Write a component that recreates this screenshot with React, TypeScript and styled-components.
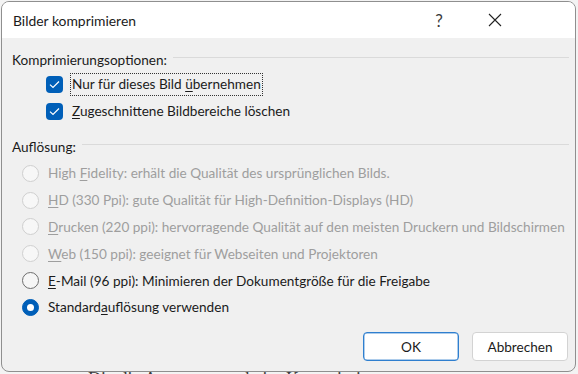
import React from "react";
import styled, { createGlobalStyle } from "styled-components";

const Global = createGlobalStyle`
  html, body { margin: 0; padding: 0; }
  body {
    width: 578px;
    height: 374px;
    overflow: hidden;
    background: #f3f3f3;
    font-family: Lato, "Open Sans", Arial, sans-serif;
  }
`;

const Backdrop = styled.div`
  width: 578px;
  height: 374px;
  overflow: hidden;
  display: flex;
  flex-direction: column;
  background: #f3f3f3;
`;

const Dialog = styled.div`
  position: relative;
  z-index: 1;
  flex: none;
  width: 575px;
  height: 371px;
  margin: 1px 0 0 1px;
  border: 1px solid #8f8f8f;
  border-radius: 8px;
  overflow: hidden;
  display: flex;
  flex-direction: column;
  background: #f0f0f0;
  box-sizing: border-box;
`;

const DocLine = styled.div`
  flex: none;
  margin: 0 0 0 88px;
  font-family: "Liberation Serif", serif;
  font-size: 18px;
  line-height: 14px;
  color: #3a3a3a;
  white-space: nowrap;
`;

const TitleBar = styled.div`
  flex: none;
  height: 36px;
  background: #ffffff;
  display: flex;
  align-items: center;
  padding-left: 11px;
`;

const Title = styled.div`
  flex: 1;
  font-size: 13.9px;
  color: #1b1b1b;
`;

const HelpButton = styled.div`
  width: 16px;
  text-align: center;
  color: #3a3a3a;
  font-size: 17px;
  font-weight: 400;
  margin-right: 41px;
`;

const CloseButton = styled.div`
  width: 14px;
  height: 14px;
  display: flex;
  margin-right: 73px;
`;

const Content = styled.div`
  flex: 1;
  display: flex;
  flex-direction: column;
  padding: 12px 0 10px 10px;
`;

const GroupHeader = styled.div<{ $top: number }>`
  height: 20px;
  margin-top: ${(p) => p.$top}px;
  display: flex;
  align-items: center;
  gap: 6px;
  font-size: 13.6px;
  color: #1b1b1b;
  padding-right: 6px;
  &::after {
    content: "";
    flex: 1;
    height: 1px;
    background: #dadada;
    margin-top: -6px;
  }
`;

const CheckRow = styled.div<{ $top?: number }>`
  height: 27px;
  margin-top: ${(p) => p.$top ?? 0}px;
  display: flex;
  align-items: center;
  padding-left: 34px;
  font-size: 13.6px;
  color: #1b1b1b;
`;

const CheckBox = styled.span`
  width: 17px;
  height: 17px;
  border-radius: 4px;
  background: #005fb8;
  display: flex;
  align-items: center;
  justify-content: center;
  margin-right: 7px;
  flex: none;
`;

const Label = styled.span<{ $focus?: boolean }>`
  padding: 2px 1px 3px 1px;
  border: 1px dotted ${(p) => (p.$focus ? "#333" : "transparent")};
`;

const RadioList = styled.div`
  margin-top: 3px;
  display: flex;
  flex-direction: column;
`;

const RadioRow = styled.div<{ $disabled?: boolean }>`
  height: 26.8px;
  display: flex;
  align-items: center;
  padding-left: 10px;
  font-size: 13.6px;
  white-space: nowrap;
  color: ${(p) => (p.$disabled ? "#9e9e9e" : "#1b1b1b")};
`;

const Radio = styled.span<{ $state: "disabled" | "off" | "on" }>`
  width: 17px;
  height: 17px;
  border-radius: 50%;
  box-sizing: border-box;
  flex: none;
  margin-right: 9px;
  display: flex;
  align-items: center;
  justify-content: center;
  background: ${(p) =>
    p.$state === "on" ? "#005fb8" : p.$state === "off" ? "#f6f6f6" : "#f7f7f7"};
  border: 1px solid
    ${(p) =>
      p.$state === "on" ? "#005fb8" : p.$state === "off" ? "#6e6e6e" : "#cfcfcf"};
  &::after {
    content: "";
    display: ${(p) => (p.$state === "on" ? "block" : "none")};
    width: 7px;
    height: 7px;
    border-radius: 50%;
    background: #ffffff;
  }
`;

const U = styled.span`
  text-decoration: underline;
  text-underline-offset: 2px;
`;

const Footer = styled.div`
  margin-top: auto;
  display: flex;
  justify-content: flex-end;
  gap: 13px;
  padding-right: 7px;
`;

const Button = styled.button<{ $primary?: boolean }>`
  width: 96px;
  height: 29px;
  box-sizing: border-box;
  border-radius: 4px;
  background: #ffffff;
  border: 1px solid ${(p) => (p.$primary ? "#2f7fcf" : "#d3d3d3")};
  box-shadow: ${(p) => (p.$primary ? "inset 0 0 0 0.5px #5d9ad8" : "none")};
  font-family: inherit;
  font-size: 13.6px;
  color: #1b1b1b;
  padding: 0;
`;

const Check = () => (
  <svg width="11" height="9" viewBox="0 0 11 9">
    <path d="M1 4.6 L4 7.5 L10 1.5" fill="none" stroke="#ffffff" strokeWidth="1.2" />
  </svg>
);

const CloseIcon = () => (
  <svg width="14" height="14" viewBox="0 0 14 14">
    <path d="M1 1 L13 13 M13 1 L1 13" stroke="#222" strokeWidth="1.1" />
  </svg>
);

export default function App() {
  return (
    <>
      <Global />
      <Backdrop>
        <Dialog>
          <TitleBar>
            <Title>Bilder komprimieren</Title>
            <HelpButton>?</HelpButton>
            <CloseButton>
              <CloseIcon />
            </CloseButton>
          </TitleBar>
          <Content>
            <GroupHeader $top={0}>Komprimierungsoptionen:</GroupHeader>
            <CheckRow $top={1}>
              <CheckBox>
                <Check />
              </CheckBox>
              <Label $focus>
                Nur für dieses Bild <U>ü</U>bernehmen
              </Label>
            </CheckRow>
            <CheckRow>
              <CheckBox>
                <Check />
              </CheckBox>
              <Label>
                <U>Z</U>ugeschnittene Bildbereiche löschen
              </Label>
            </CheckRow>
            <GroupHeader $top={12}>Auflösung:</GroupHeader>
            <RadioList>
              <RadioRow $disabled>
                <Radio $state="disabled" />
                <span>
                  High <U>F</U>idelity: erhält die Qualität des ursprünglichen Bilds.
                </span>
              </RadioRow>
              <RadioRow $disabled>
                <Radio $state="disabled" />
                <span>
                  <U>H</U>D (330 Ppi): gute Qualität für High-Definition-Displays (HD)
                </span>
              </RadioRow>
              <RadioRow $disabled>
                <Radio $state="disabled" />
                <span>
                  <U>D</U>rucken (220 ppi): hervorragende Qualität auf den meisten Druckern und Bildschirmen
                </span>
              </RadioRow>
              <RadioRow $disabled>
                <Radio $state="disabled" />
                <span>
                  <U>W</U>eb (150 ppi): geeignet für Webseiten und Projektoren
                </span>
              </RadioRow>
              <RadioRow>
                <Radio $state="off" />
                <span>
                  <U>E</U>-Mail (96 ppi): Minimieren der Dokumentgröße für die Freigabe
                </span>
              </RadioRow>
              <RadioRow>
                <Radio $state="on" />
                <span>
                  Standard<U>a</U>uflösung verwenden
                </span>
              </RadioRow>
            </RadioList>
            <Footer>
              <Button $primary>OK</Button>
              <Button>Abbrechen</Button>
            </Footer>
          </Content>
        </Dialog>
        <DocLine>Die die Anpassungen beim Komprimieren</DocLine>
      </Backdrop>
    </>
  );
}
